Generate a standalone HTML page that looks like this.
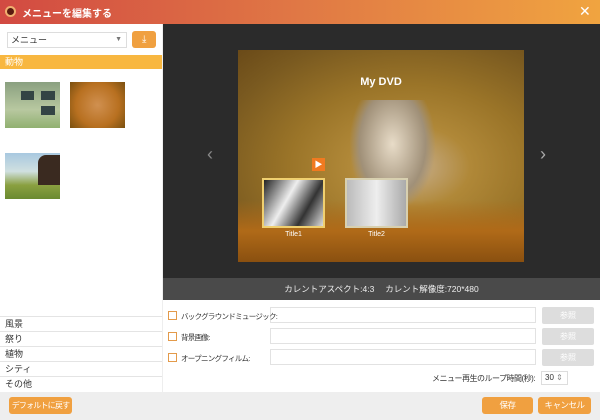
<!DOCTYPE html><html><head><meta charset="utf-8"><style>
*{margin:0;padding:0;box-sizing:border-box}
html,body{width:600px;height:420px;overflow:hidden}
body{font-family:"Liberation Sans","Noto Sans CJK JP",sans-serif;font-size:9px;color:#333;background:#eee;position:relative}
.a{position:absolute;white-space:nowrap}
.btn{position:absolute;background:#f0a040;color:#fff;border-radius:3px;text-align:center;font-size:8.5px;white-space:nowrap;letter-spacing:-0.5px}
.gb{position:absolute;background:#ddd;color:#fff;border-radius:2px;text-align:center;line-height:17px;font-size:8px;left:542px;width:52px;height:17px}
.inp{position:absolute;left:270px;width:266px;height:16px;border:1px solid #e2e2e2;background:#fff}
.cb{position:absolute;left:168px;width:9px;height:9px;border:1px solid #e39a4a;background:#fff}
.lb{position:absolute;left:181px;font-size:7.5px;white-space:nowrap;letter-spacing:-0.7px;z-index:2}
.cat{position:absolute;left:0;width:162px;height:15px;border-top:1px solid #e4e4e4;padding-left:5px;line-height:15px;font-size:9px}
</style></head><body>
<div class="a" style="left:0;top:0;width:600px;height:24px;background:linear-gradient(90deg,#d24a42,#e07845 50%,#f0a440)"></div>
<div class="a" style="left:5px;top:6px;width:11px;height:11px;border-radius:50%;background:#5a1a10;border:2px solid #f0b070"></div>
<div class="a" style="left:22px;top:5px;color:#fff;font-size:10px;font-weight:bold">メニューを編集する</div>
<div class="a" style="left:579px;top:3px;color:#fff;font-size:14px">✕</div>
<div class="a" style="left:0;top:24px;width:162px;height:368px;background:#fff"></div>
<div class="a" style="left:7px;top:32px;width:120px;height:16px;border:1px solid #ddd;padding-left:3px;line-height:14px;font-size:9px">メニュー<span style="position:absolute;right:4px;top:0;color:#777;font-size:7px">▼</span></div>
<div class="btn" style="left:132px;top:31px;width:24px;height:17px;line-height:17px;font-size:10px">⤓</div>
<div class="a" style="left:0;top:55px;width:162px;height:14px;background:#f8b740;color:#fff;padding-left:5px;line-height:14px;font-size:9px">動物</div>
<div class="a" style="left:5px;top:82px;width:55px;height:46px;background:linear-gradient(#8aa080,#b8c8a0 60%,#90b070)"></div>
<div class="a" style="left:21px;top:91px;width:13px;height:9px;background:#344"></div><div class="a" style="left:41px;top:91px;width:14px;height:9px;background:#344"></div><div class="a" style="left:41px;top:106px;width:14px;height:9px;background:#344"></div>
<div class="a" style="left:70px;top:82px;width:55px;height:46px;background:radial-gradient(circle at 50% 50%,#d09050,#b87020 60%,#7a5010)"></div>
<div class="a" style="left:5px;top:153px;width:55px;height:46px;background:linear-gradient(#a8c8e0,#d0e0e0 40%,#8aa040 70%,#6a8a30)"></div>
<div class="a" style="left:38px;top:155px;width:22px;height:30px;background:#3a2a20;border-radius:8px 0 0 0"></div>
<div class="cat" style="top:316px">風景</div><div class="cat" style="top:331px">祭り</div><div class="cat" style="top:346px">植物</div><div class="cat" style="top:361px">シティ</div><div class="cat" style="top:376px">その他</div>
<div class="a" style="left:163px;top:24px;width:437px;height:254px;background:#2b2b2b"></div>
<div class="a" style="left:238px;top:50px;width:286px;height:212px;background:radial-gradient(ellipse at 60% 55%,#c8b090 0%,#b08838 25%,#9a7428 50%,#7a5a20 80%,#6a4a18)"></div>
<div class="a" style="left:238px;top:200px;width:286px;height:62px;background:linear-gradient(transparent,#b06a18 50%,#8a5010)"></div>
<div class="a" style="left:350px;top:100px;width:85px;height:110px;background:radial-gradient(ellipse at 50% 40%,#e8dcc8,#a09078 55%,transparent 72%)"></div>
<div class="a" style="left:238px;top:76px;width:286px;text-align:center;color:#fff;font-weight:bold;font-size:11px">My DVD</div>
<div class="a" style="left:312px;top:158px;width:13px;height:13px;background:#f07a20;color:#fff;font-size:8px;text-align:center;line-height:13px">▶</div>
<div class="a" style="left:262px;top:178px;width:63px;height:50px;border:2px solid #f0d070;background:linear-gradient(120deg,#222,#eee 40%,#333 70%,#ddd)"></div>
<div class="a" style="left:345px;top:178px;width:63px;height:50px;border:2px solid #d8d0b0;background:linear-gradient(90deg,#bbb,#eee 50%,#aaa)"></div>
<div class="a" style="left:262px;top:231px;width:63px;text-align:center;color:#fff;font-size:7px">Title1</div>
<div class="a" style="left:345px;top:231px;width:63px;text-align:center;color:#fff;font-size:7px">Title2</div>
<div class="a" style="left:207px;top:144px;color:#888;font-size:18px">‹</div>
<div class="a" style="left:540px;top:144px;color:#aaa;font-size:18px">›</div>
<div class="a" style="left:163px;top:278px;width:437px;height:22px;background:#4a4a4a;color:#eee;text-align:center;line-height:22px;font-size:8.5px">カレントアスペクト:4:3　 カレント解像度:720*480</div>
<div class="a" style="left:163px;top:300px;width:437px;height:92px;background:#fff"></div>
<div class="inp" style="top:307px"></div><div class="cb" style="top:311px"></div><div class="lb" style="top:311px">バックグラウンドミュージック:</div><div class="gb" style="top:307px">参照</div>
<div class="inp" style="top:328px"></div><div class="cb" style="top:332px"></div><div class="lb" style="top:332px">背景画像:</div><div class="gb" style="top:328px">参照</div>
<div class="inp" style="top:349px"></div><div class="cb" style="top:353px"></div><div class="lb" style="top:353px">オープニングフィルム:</div><div class="gb" style="top:349px">参照</div>
<div class="a" style="left:432px;top:373px;font-size:8px;letter-spacing:-0.5px">メニュー再生のループ時間(秒):</div>
<div class="a" style="left:541px;top:371px;width:27px;height:14px;border:1px solid #ddd;font-size:8px;padding-left:3px;line-height:12px">30 <span style="color:#888">⇕</span></div>
<div class="btn" style="left:9px;top:397px;width:63px;height:17px;line-height:17px;font-size:8px;letter-spacing:-0.8px">デフォルトに戻す</div>
<div class="btn" style="left:482px;top:397px;width:51px;height:17px;line-height:17px">保存</div>
<div class="btn" style="left:538px;top:397px;width:53px;height:17px;line-height:17px">キャンセル</div>
</body></html>
